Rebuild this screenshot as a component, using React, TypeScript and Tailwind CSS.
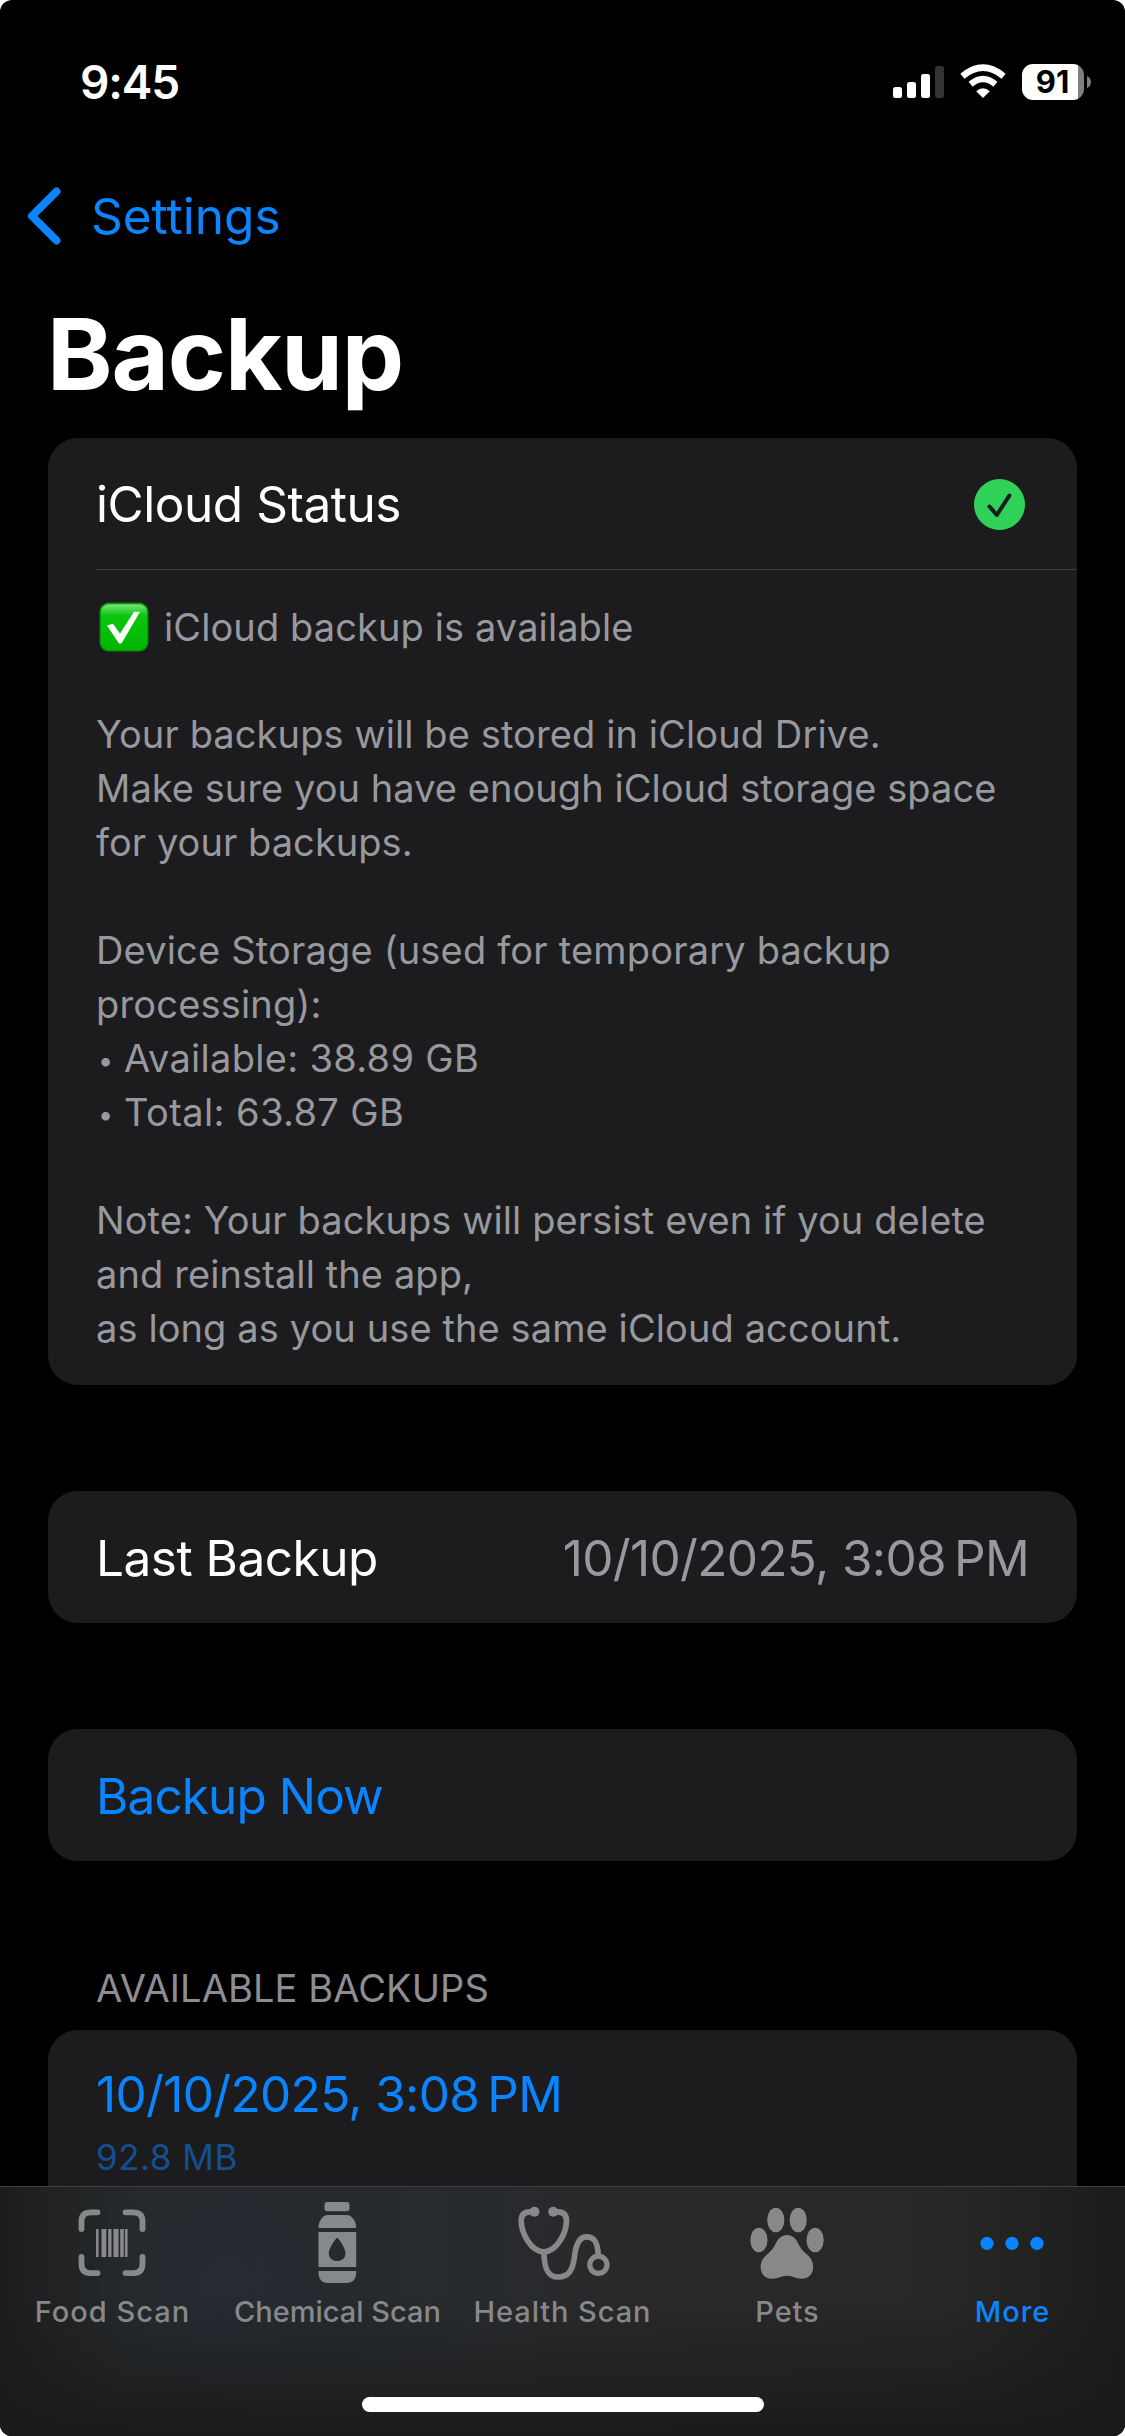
import type { ReactNode } from "react";

function Card({ className = "", children }: { className?: string; children: ReactNode }) {
  return (
    <div className={`mx-12 rounded-[30px] bg-[#1c1c1e] ${className}`}>
      {children}
    </div>
  );
}

function Timestamp({ date, time, period }: { date: string; time: string; period: string }) {
  return (
    <span className="whitespace-nowrap tracking-[-0.65px]">
      {date}, {time}
      <span className="ml-[8px]">{period}</span>
    </span>
  );
}

function Bullet() {
  return <span className="inline-block w-[28px] pl-[2px] align-[2.5px] text-[27px] leading-none">•</span>;
}

function StatusBar() {
  return (
    <div className="flex h-[165px] items-start justify-between pt-[56px] pl-[80px] pr-[34px]">
      <div className="text-[46px] leading-[53px] font-semibold tracking-[-1.2px]">9:45</div>
      <div className="flex items-center pt-2">
        <svg width="52" height="36" viewBox="0 0 52 36" className="mr-[14px]">
          <rect x="0" y="23" width="9" height="11" rx="2.5" fill="#fff" />
          <rect x="14" y="18" width="9" height="16" rx="2.5" fill="#fff" />
          <rect x="28" y="10" width="9" height="24" rx="2.5" fill="#fff" />
          <rect x="42" y="2" width="9" height="32" rx="2.5" fill="#333" />
        </svg>
        <svg width="48" height="36" viewBox="0 0 48 36" className="mr-[15px]">
          <path d="M24 34 L17.2 27.2 Q24 21.2 30.8 27.2 Z" fill="#fff" />
          <path d="M11.6 20.2 Q24 9.8 36.4 20.2" fill="none" stroke="#fff" strokeWidth="6.4" />
          <path d="M3.4 12.2 Q24 -5 44.6 12.2" fill="none" stroke="#fff" strokeWidth="6.4" />
        </svg>
        <div className="flex h-9 w-[62px] items-center overflow-hidden rounded-[11px] bg-[linear-gradient(to_right,#fff_56px,#808080_56px)]">
          <span className="w-[61px] text-center text-[31px] leading-9 font-bold text-black">91</span>
        </div>
        <svg width="4" height="12" viewBox="0 0 4 12" className="ml-[3px]">
          <path d="M0 0 C5.3 2 5.3 10 0 12 Z" fill="#808080" />
        </svg>
      </div>
    </div>
  );
}

function CheckEmoji() {
  return (
    <svg width="50" height="50" viewBox="0 0 50 50" className="mr-[15px] shrink-0">
      <defs>
        <linearGradient id="emoji" x1="0" y1="0" x2="0" y2="1">
          <stop offset="0" stopColor="#7de37c" />
          <stop offset="0.24" stopColor="#0cc70f" />
          <stop offset="1" stopColor="#00b400" />
        </linearGradient>
      </defs>
      <rect x="0.5" y="0.5" width="49" height="49" rx="9" fill="#058c08" />
      <rect x="1.8" y="2.2" width="46.4" height="46" rx="8" fill="url(#emoji)" />
      <path d="M8 23.5 L14 21.8 L21 31.5 L35 9.8 L41 9.8 L22.5 41.5 L20 41.5 Z" fill="#fff" />
    </svg>
  );
}

function FoodIcon() {
  return (
    <svg width="120" height="90" viewBox="0 0 120 90">
      <g fill="none" stroke="currentColor" strokeWidth="5.8" strokeLinecap="round">
        <path d="M44.5 16.3 H37.5 Q28.5 16.3 28.5 25.3 V33" />
        <path d="M72.5 16.3 H80.5 Q89.5 16.3 89.5 25.3 V33" />
        <path d="M44.5 77.1 H37.5 Q28.5 77.1 28.5 68.1 V61" />
        <path d="M72.5 77.1 H80.5 Q89.5 77.1 89.5 68.1 V61" />
      </g>
      <path
        fill="currentColor"
        d="M43 33h2.6v28H43zM48.5 33h4.8v28h-4.8zM55.2 33h3.3v28h-3.3zM60.5 33h5v28h-5zM67.2 33h3.6v28h-3.6zM71.9 33h2.7v28h-2.7z"
      />
    </svg>
  );
}

function ChemicalIcon() {
  return (
    <svg width="120" height="90" viewBox="0 0 120 90" fill="currentColor">
      <rect x="46.5" y="6" width="25" height="9.3" rx="2.8" />
      <path d="M40.5 32 C40.5 26 43.5 21.5 47 19.6 Q48.2 19 49.5 19 H69 Q70.3 19 71.5 19.6 C75 21.5 78.2 26 78.2 32 Z" />
      <path
        fillRule="evenodd"
        d="M40.5 36 H78.2 V71 H40.5 Z M59.2 41.7 C58.2 41.7 50.8 52 50.8 57.2 C50.8 62 54.4 65 59.2 65 C64 65 67.5 62 67.5 57.2 C67.5 52 60.2 41.7 59.2 41.7 Z"
      />
      <path d="M40.5 75 H78.2 V76.5 C78.2 83 74.5 87 68.5 87 H50 C44 87 40.5 83 40.5 76.5 Z" />
    </svg>
  );
}

function HealthIcon() {
  return (
    <svg width="120" height="90" viewBox="0 0 120 90" fill="none" stroke="currentColor" strokeWidth="5.7">
      <circle cx="31.5" cy="15.7" r="5" fill="currentColor" stroke="none" />
      <circle cx="50.2" cy="15.7" r="5" fill="currentColor" stroke="none" />
      <path d="M31 15.8 H27 C21 15.8 18.2 19 18.2 25 C18.2 36 27.5 55.8 40.8 55.8 C54.2 55.8 63.5 36 63.5 25 C63.5 19 60.7 15.8 54.7 15.8 H51" />
      <path d="M41 56 C41 71 44 81 55 81 C66.5 81 70 73 71.6 60 C73 47 76.5 40.8 83.7 40.8 C91 40.8 94.8 46 95.2 59" />
      <circle cx="95.4" cy="68.8" r="8.6" strokeWidth="5.2" />
    </svg>
  );
}

function PetsIcon() {
  return (
    <svg width="120" height="90" viewBox="0 0 120 90" fill="currentColor">
      <ellipse cx="47.8" cy="24" rx="8.6" ry="12.3" />
      <ellipse cx="70.2" cy="24" rx="8.6" ry="12.3" />
      <ellipse cx="30.9" cy="44" rx="8.6" ry="12.3" />
      <ellipse cx="87.1" cy="44" rx="8.6" ry="12.3" />
      <path d="M59 39 C64.5 39 68 42.5 70.5 48 C72.8 53 75.5 55.5 79 58.5 C82.7 61.7 85.2 65.5 85.2 71 C85.2 78 80.5 82.8 73.5 82.8 C67.5 82.8 65 79.8 59 79.8 C53 79.8 50.5 82.8 44.5 82.8 C37.5 82.8 32.6 78 32.6 71 C32.6 65.5 35.3 61.7 39 58.5 C42.5 55.5 45.2 53 47.5 48 C50 42.5 53.5 39 59 39 Z" />
    </svg>
  );
}

function MoreIcon() {
  return (
    <svg width="120" height="90" viewBox="0 0 120 90" fill="currentColor">
      <circle cx="34" cy="47.3" r="6.6" />
      <circle cx="59" cy="47.3" r="6.6" />
      <circle cx="83.9" cy="47.3" r="6.6" />
    </svg>
  );
}

const tabs = [
  { label: "Food Scan", icon: <FoodIcon />, style: "text-[#87888a] tracking-[1px]" },
  { label: "Chemical Scan", icon: <ChemicalIcon />, style: "text-[#87888a] tracking-[0px]" },
  { label: "Health Scan", icon: <HealthIcon />, style: "text-[#87888a] tracking-[0.9px]" },
  { label: "Pets", icon: <PetsIcon />, style: "text-[#87888a] tracking-[0.9px]" },
  { label: "More", icon: <MoreIcon />, style: "text-[#0a84ff] tracking-[0.9px]" },
];

export default function App() {
  return (
    <div className="bg-white">
      <div className="flex h-[2436px] w-[1125px] flex-col overflow-hidden rounded-xl bg-black font-['Inter',sans-serif] text-[49.5px] text-white">
        <StatusBar />

        <header className="h-[273px] shrink-0">
          <div className="flex h-[102px] items-center pl-[27px] text-[#0a84ff]">
            <svg width="34" height="58" viewBox="0 0 34 58" fill="none" className="mr-[30px]">
              <path d="M29.5 4.5 L5 29 L29.5 53.5" stroke="currentColor" strokeWidth="8" strokeLinecap="round" strokeLinejoin="round" />
            </svg>
            <span className="tracking-[0px]">Settings</span>
          </div>
          <h1 className="pt-[27px] pl-[47px] text-[99px] leading-[120px] font-bold tracking-[-1.1px]">Backup</h1>
        </header>

        <Card className="h-[947px] shrink-0">
          <div className="flex h-[131px] items-center justify-between pt-[2px] pr-[52px] pl-12">
            <span className="tracking-[-0.45px]">iCloud Status</span>
            <svg width="51" height="51" viewBox="0 0 51 51">
              <circle cx="25.5" cy="25.5" r="25.5" fill="#30d158" />
              <path d="M15.5 27.5 L22.8 36 L35.4 16.5" fill="none" stroke="#1c1c1e" strokeWidth="4" strokeLinecap="round" strokeLinejoin="round" />
            </svg>
          </div>
          <div className="ml-12 h-px bg-[#3d3d40]" />
          <div className="pt-[29px] pl-12 text-[38px] leading-[54px] tracking-[0.1px] whitespace-nowrap text-[#98989f]">
            <p className="flex h-[54px] items-center pt-px pl-[3px]">
              <CheckEmoji />
              iCloud backup is available
            </p>
            <br />
            <p>Your backups will be stored in iCloud Drive.</p>
            <p className="tracking-[0.05px]">
              Make sure you have enough iCloud storage space
              <br />
              for your backups.
            </p>
            <br />
            <p className="tracking-[0.18px]">
              Device Storage (used for temporary backup
              <br />
              processing):
            </p>
            <p className="h-[54px] tracking-[0.3px]">
              <Bullet />
              Available: 38.89 GB
            </p>
            <p className="h-[54px] tracking-[0.4px]">
              <Bullet />
              Total: 63.87 GB
            </p>
            <br />
            <p>
              Note: Your backups will persist even if you delete
              <br />
              and reinstall the app,
            </p>
            <p>as long as you use the same iCloud account.</p>
          </div>
        </Card>

        <Card className="mt-[106px] flex h-[132px] shrink-0 items-center justify-between px-12 pt-[2px]">
          <span className="tracking-[-0.5px]">Last Backup</span>
          <span className="text-[#98989f]">
            <Timestamp date="10/10/2025" time="3:08" period="PM" />
          </span>
        </Card>

        <Card className="mt-[106px] flex h-[132px] shrink-0 items-center px-12 pt-[2px] text-[#0a84ff]">
          <span className="tracking-[-0.9px]">Backup Now</span>
        </Card>

        <h2 className="mt-[101px] h-[68px] shrink-0 pl-24 text-[38px] leading-[52px] tracking-[0.1px] text-[#8d8d93]">
          AVAILABLE BACKUPS
        </h2>
        <Card className="h-[156px] shrink-0 rounded-b-none px-12 pt-[34px]">
          <div className="leading-[60px] text-[#0a84ff]">
            <Timestamp date="10/10/2025" time="3:08" period="PM" />
          </div>
          <div className="pt-[9px] text-[35px] leading-[48px] tracking-[0.5px] text-[#144f8f]">92.8 MB</div>
        </Card>

        <nav className="flex h-[250px] shrink-0 flex-col items-center border-t border-[#414143] bg-[linear-gradient(to_bottom,transparent_45%,#1b1b1c_100%),radial-gradient(circle_at_225px_95px,#262b33_0,transparent_140px),linear-gradient(to_right,#1d1d1e,#25292b_12%,#272b2e_38%,#29292b_55%,#272728_84%,#1c1c1d)]">
          <div className="grid w-full grid-cols-5 pt-[9px]">
            {tabs.map((tab) => (
              <div key={tab.label} className={`flex flex-col items-center text-[29px] font-medium ${tab.style}`}>
                {tab.icon}
                <span className="mt-2 leading-[35px] whitespace-nowrap">{tab.label}</span>
              </div>
            ))}
          </div>
          <div className="mt-[68px] h-[15px] w-[402px] rounded-full bg-white" />
        </nav>
      </div>
    </div>
  );
}
